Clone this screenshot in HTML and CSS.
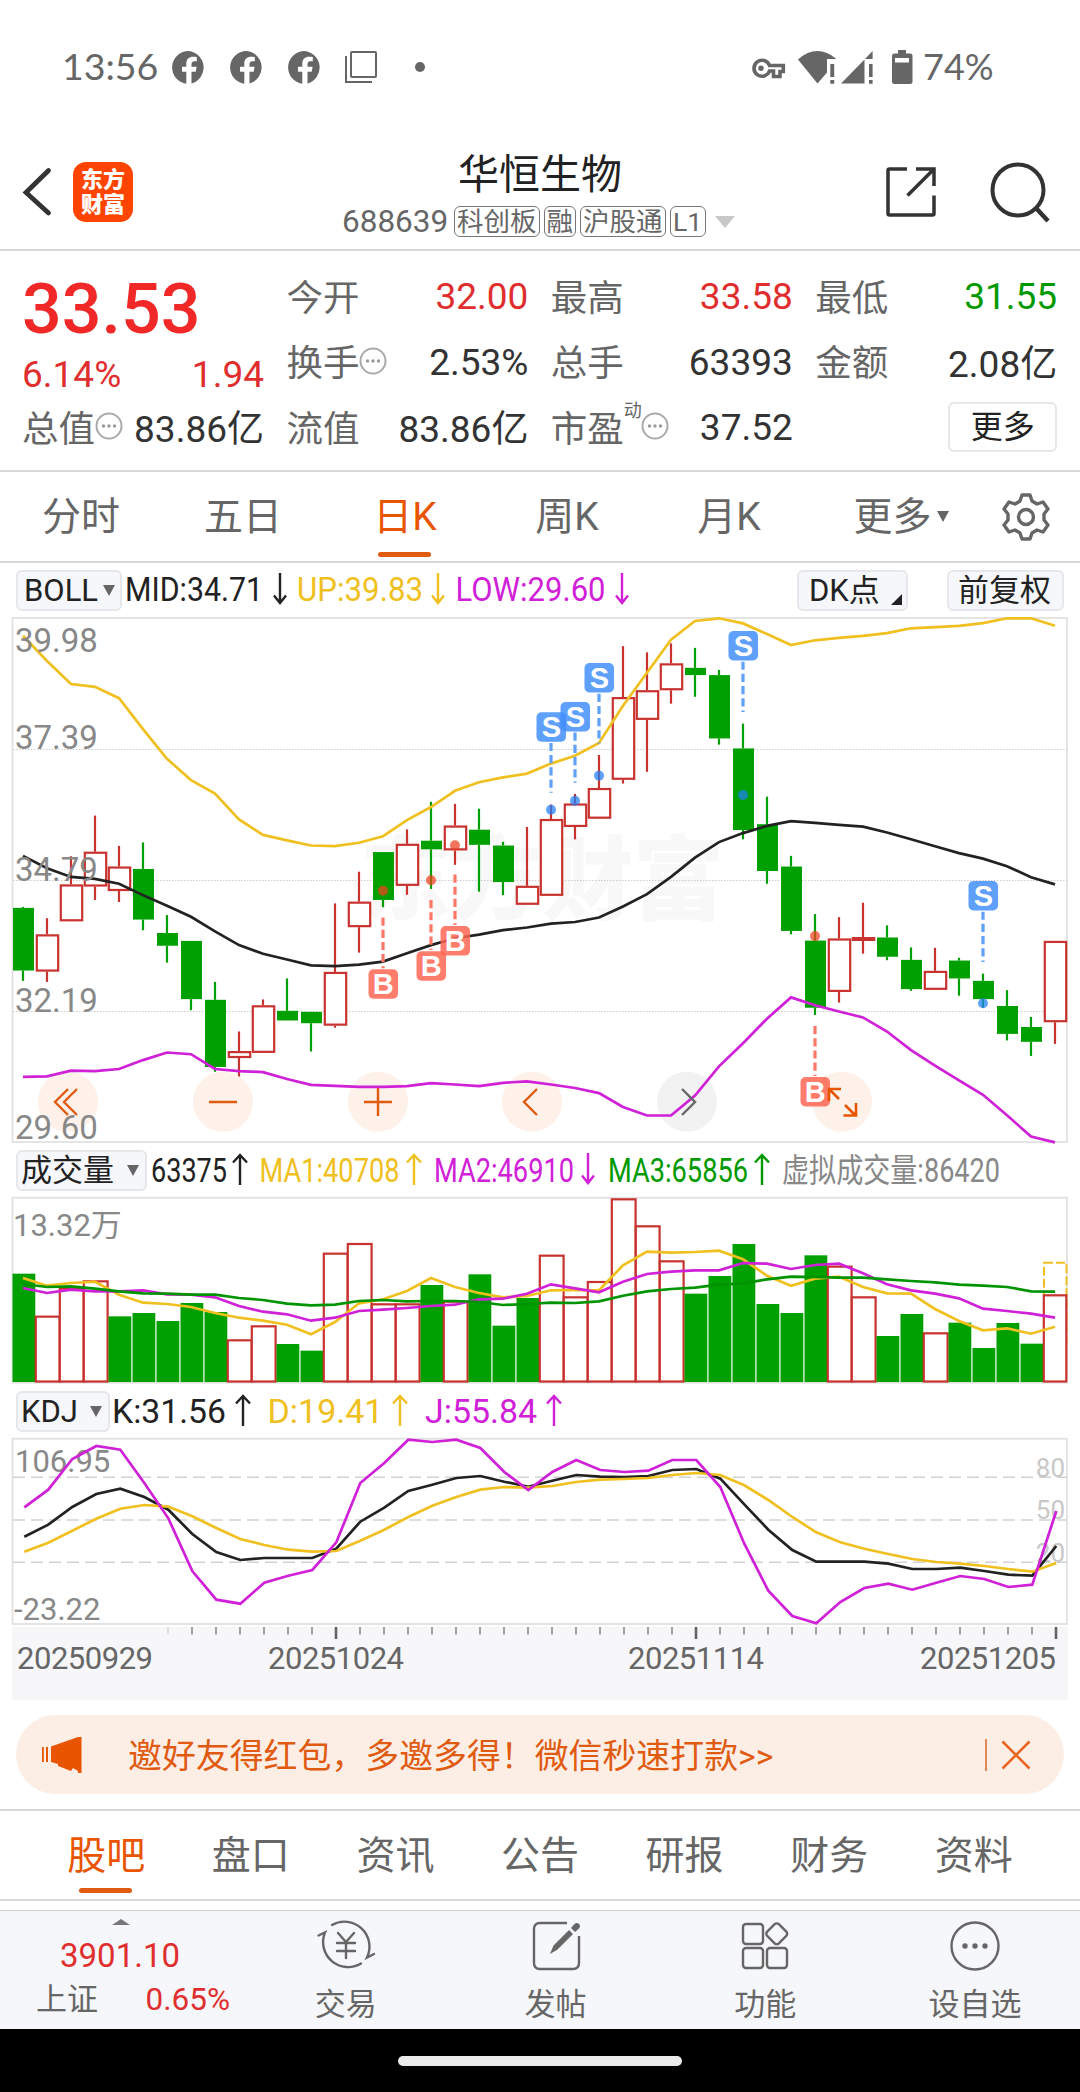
FILE: index.html
```html
<!DOCTYPE html>
<html lang="zh-CN">
<head>
<meta charset="utf-8">
<title>华恒生物 688639</title>
<link rel="stylesheet" href="styles.css">
</head>
<body>
<svg width="0" height="0" class="defs">
  <symbol id="fb" viewBox="0 0 33 33"><path fill="#666" fill-rule="evenodd" d="M16.500 0a16.500 16.500 0 0 1 4 32.400V20.800h4.200l.9-5h-5.100v-2.600c0-1.900 1-2.900 3-2.900h2.300V6.100c-1-.3-2.200-.4-3.500-.4-4.400 0-7 2.500-7 6.900v3.200H11v5h4.300v12A16.500 16.500 0 0 1 16.500 0z"/></symbol>
  <symbol id="info" viewBox="0 0 28 28"><circle cx="14" cy="14" r="12.500" fill="none" stroke="#aaa" stroke-width="2"/><circle cx="8.500" cy="14" r="1.700" fill="#999"/><circle cx="14" cy="14" r="1.700" fill="#999"/><circle cx="19.500" cy="14" r="1.700" fill="#999"/></symbol>
  <symbol id="up" viewBox="0 0 16 32"><path d="M8 32V2M1 9.500 8 2l7 7.500" fill="none" stroke="currentColor" stroke-width="2.400"/></symbol>
  <symbol id="down" viewBox="0 0 16 32"><path d="M8 0v30M2 22.500 8 30l6-7.500" fill="none" stroke="currentColor" stroke-width="2.400"/></symbol>
</svg>

<header class="status">
  <span class="clock">13:56</span>
  <svg class="fb" width="33" height="33"><use href="#fb"/></svg>
  <svg class="fb" width="33" height="33"><use href="#fb"/></svg>
  <svg class="fb" width="33" height="33"><use href="#fb"/></svg>
  <svg width="32" height="32" viewBox="0 0 32 32" fill="none" stroke="#666" stroke-width="2"><rect x="6" y="1" width="25" height="25" rx="1"/><path d="M1 5v26h26"/></svg>
  <i class="dot"></i>
  <svg class="status-right" width="165" height="36" viewBox="750 48 165 36">
    <path fill="none" stroke="#666" stroke-width="3.600" d="M768.500 64.500A8 8 0 1 0 768.500 70H772.500V75.500H779V70.500H782.300V64.500Z"/>
    <circle cx="760" cy="67.300" r="2.700" fill="#666"/>
    <path fill="#666" d="M797 58.500Q816 42 835.500 58H826V71.500L816.500 82.500Z M829.300 63h3.900v13h-3.900zM829.300 79h3.900v3.700h-3.900z M840 82.500 863.500 58.500V82.500Z M864 58 871.600 50V58Z M868 63h3.600v13h-3.600zM868 79h3.600v3.700h-3.600z"/>
    <path fill="#666" fill-rule="evenodd" d="M897 49h8v3.500h4a2.500 2.500 0 0 1 2.500 2.500v25.500a2.500 2.500 0 0 1-2.500 2.500h-15.500a2.500 2.500 0 0 1-2.500-2.500V55a2.500 2.500 0 0 1 2.500-2.500h3.500zM894 57h14v4.500h-14z"/>
  </svg>
  <span class="battery">74%</span>
</header>

<nav class="topbar">
  <svg class="back" width="30" height="50" viewBox="0 0 30 50"><path d="M26.500 3.500 4 25.500 26.500 46" fill="none" stroke="#333" stroke-width="4.800" stroke-linecap="round"/></svg>
  <div class="logo"><span>东方</span><span>财富</span></div>
  <div class="title">
    <h1>华恒生物</h1>
    <p><span class="code">688639</span><b>科创板</b><b>融</b><b>沪股通</b><b>L1</b><i></i></p>
  </div>
  <svg class="share" width="50" height="50" viewBox="0 0 50 50" fill="none" stroke="#333" stroke-width="3.500"><path d="M21 2H3.500Q2 2 2 3.500V46.500Q2 48 3.500 48H46.500Q48 48 48 46.500V28.500M30 2H48V19M48 2 21.500 28.500"/></svg>
  <svg class="search" width="60" height="60" viewBox="0 0 60 60" fill="none" stroke="#333"><circle cx="28" cy="28" r="25.500" stroke-width="4"/><path d="M46 46 58 59" stroke-width="4.500"/></svg>
</nav>

<section class="quote">
  <div class="price">
    <strong>33.53</strong>
    <p><span>6.14%</span><span>1.94</span></p>
  </div>
  <dl><dt>今开</dt><dd class="red">32.00</dd></dl>
  <dl><dt>最高</dt><dd class="red">33.58</dd></dl>
  <dl><dt>最低</dt><dd class="green">31.55</dd></dl>
  <dl><dt>换手<svg width="28" height="28"><use href="#info"/></svg></dt><dd>2.53%</dd></dl>
  <dl><dt>总手</dt><dd>63393</dd></dl>
  <dl><dt>金额</dt><dd class="cjk">2.08亿</dd></dl>
  <dl><dt>总值<svg width="28" height="28"><use href="#info"/></svg></dt><dd class="cjk">83.86亿</dd></dl>
  <dl><dt>流值</dt><dd class="cjk">83.86亿</dd></dl>
  <dl><dt>市盈<sup>动</sup><svg width="28" height="28"><use href="#info"/></svg></dt><dd>37.52</dd></dl>
  <div class="more"><button>更多</button></div>
</section>

<nav class="periods">
  <a>分时</a><a>五日</a><a class="on">日K</a><a>周K</a><a>月K</a><a class="drop">更多<i></i></a>
  <svg width="48" height="48" viewBox="0 0 48 48" fill="none" stroke="#666" stroke-width="3.400" stroke-linejoin="round"><path d="M20 2h8l2 6 5 3 6-2 5 7-4 5v6l4 5-5 7-6-2-5 3-2 6h-8l-2-6-5-3-6 2-5-7 4-5v-6l-4-5 5-7 6 2 5-3z"/><circle cx="24" cy="24" r="7.500"/></svg>
</nav>

<section class="legend first">
  <button class="pick boll">BOLL<i></i></button>
  <svg width="520" height="48" viewBox="122 562 520 48">
    <text x="125" y="600.500" textLength="138" fill="#222">MID:34.71</text><use href="#down" x="272" y="573" width="16" height="32" color="#222"/>
    <text x="297" y="600.500" textLength="126" fill="#f0c020">UP:39.83</text><use href="#down" x="430" y="573" width="16" height="32" color="#f0c020"/>
    <text x="455.500" y="600.500" textLength="150" fill="#d020d8">LOW:29.60</text><use href="#down" x="614" y="573" width="16" height="32" color="#d020d8"/>
  </svg>
  <button class="pick dk">DK点<i></i></button>
  <button class="pick fq">前复权</button>
</section>

<svg id="kline" class="chart" width="1080" height="540"></svg>

<section class="legend second">
  <button class="pick vol">成交量<i></i></button>
  <svg width="870" height="40" viewBox="147 1150 870 40">
    <text x="151" y="1182" textLength="76" fill="#222">63375</text><use href="#up" x="232" y="1153" width="16" height="32" color="#222"/>
    <text x="259.500" y="1182" textLength="140" fill="#f0c020">MA1:40708</text><use href="#up" x="406" y="1153" width="16" height="32" color="#f0c020"/>
    <text x="434" y="1182" textLength="140" fill="#d020d8">MA2:46910</text><use href="#down" x="580" y="1153" width="16" height="32" color="#d020d8"/>
    <text x="608" y="1182" textLength="140" fill="#009a00">MA3:65856</text><use href="#up" x="754" y="1153" width="16" height="32" color="#009a00"/>
    <text x="782" y="1182" textLength="218" fill="#888">虚拟成交量:86420</text>
  </svg>
</section>

<svg id="volume" class="chart" width="1080" height="200"></svg>

<section class="legend third">
  <button class="pick kdj">KDJ<i></i></button>
  <svg width="480" height="42" viewBox="110 1390 480 42">
    <text x="112" y="1423" textLength="114" fill="#222">K:31.56</text><use href="#up" x="235" y="1394" width="16" height="32" color="#222"/>
    <text x="267.500" y="1423" textLength="116" fill="#f0c020">D:19.41</text><use href="#up" x="392" y="1394" width="16" height="32" color="#f0c020"/>
    <text x="425" y="1423" textLength="112" fill="#d020d8">J:55.84</text><use href="#up" x="546" y="1394" width="16" height="32" color="#d020d8"/>
  </svg>
</section>

<svg id="kdj" class="chart" width="1080" height="268"></svg>

<aside class="banner">
  <svg width="42" height="38" viewBox="0 0 42 38" fill="#e85400"><path d="M0 11h1.800v15H0zM4 11h2v15H4zM9 10.500 36 1V35L31 32l-2 3-13-5v-2L9 26z"/><path d="M36 1h3.500v36H36z"/></svg>
  <span>邀好友得红包，多邀多得！微信秒速打款&gt;&gt;</span>
  <i></i>
  <svg width="30" height="30" viewBox="0 0 30 30"><path d="M1.500 1.500l27 27M28.500 1.500l-27 27" fill="none" stroke="#e8641c" stroke-width="2.500"/></svg>
</aside>

<nav class="tabs"><a class="on">股吧</a><a>盘口</a><a>资讯</a><a>公告</a><a>研报</a><a>财务</a><a>资料</a></nav>

<footer class="bottom">
  <div class="index"><i></i><strong>3901.10</strong><p><span>上证</span><em>0.65%</em></p></div>
  <a><svg width="60" height="52" viewBox="0 0 60 52" fill="none" stroke="#666" stroke-width="2.400" stroke-linecap="round"><path d="M16 6A25 25 0 0 1 51 38.500L58 35M45 44.500A25 25 0 0 1 9 13.500L2.500 16.500"/><path d="M22 14l8 9 8-9M30 23v16M21 24h18M21 32h18"/></svg>交易</a>
  <a><svg width="60" height="52" viewBox="0 0 60 52" fill="none" stroke="#666" stroke-width="2.400"><path d="M41 4H14Q8 4 8 10V44Q8 50 14 50H47Q53 50 53 44V17"/><path fill="#666" stroke="none" d="M24 35l3.500-8.500L43 11l4 4-15.500 15.500zM45 9l3.500-4q2.500-2 4.500 0t0 4.500L49 13z"/></svg>发帖</a>
  <a><svg width="60" height="52" viewBox="0 0 60 52" fill="none" stroke="#666" stroke-width="2.400"><rect x="8" y="5" width="20" height="20" rx="3"/><rect x="8" y="29" width="20" height="20" rx="3"/><rect x="32" y="29" width="20" height="20" rx="3"/><rect x="33.500" y="6.500" width="16.500" height="16.500" rx="3" transform="rotate(45 41.750 14.750)"/></svg>功能</a>
  <a><svg width="60" height="52" viewBox="0 0 60 52" fill="none" stroke="#666" stroke-width="2.400"><circle cx="30" cy="27" r="23.500"/><g fill="#666" stroke="none"><circle cx="20" cy="27" r="2.700"/><circle cx="30" cy="27" r="2.700"/><circle cx="40" cy="27" r="2.700"/></g></svg>设自选</a>
</footer>
<div class="gesture"><i></i></div>
<script src="charts.js"></script>
</body>
</html>
```
FILE: styles.css
```css
* { box-sizing: border-box; margin: 0; padding: 0; }
body { width: 1080px; height: 2092px; overflow: hidden; background: #fff; color: #222; font-family: Roboto, "Noto Sans CJK SC", sans-serif; }
svg { display: block; flex: none; }
i, em { font-style: normal; }
.defs { position: absolute; }
button { font: inherit; color: #222; background: #f6f7fa; border: 2px solid #e6e7ea; border-radius: 6px; }
.red { color: #e02e2e; }
.green { color: #009a00; }

/* status bar */
.status { display: flex; align-items: center; height: 134px; padding-left: 62px; color: #666; font-family: Lato, sans-serif; font-size: 37.500px; }
.clock { width: 109px; padding-bottom: 4px; }
.status .fb { margin-right: 25px; }
.status .dot { width: 10px; height: 10px; margin-left: 38px; border-radius: 50%; background: #666; }
.status-right { margin-left: 326px; }
.battery { margin-left: 7px; padding-bottom: 3px; font-size: 36px; }

/* top bar */
.topbar { display: flex; align-items: center; height: 117px; border-bottom: 2px solid #d8d8d8; }
.back { margin-left: 22px; }
.logo { display: flex; flex-direction: column; justify-content: center; width: 60px; height: 60px; margin-left: 21px; border-radius: 13px; background: #ff4400; color: #fff; text-align: center; font-size: 22px; font-weight: 900; line-height: 25px; }
.title { width: 540px; margin-left: 137px; }
.title h1 { margin-left: 188px; font-size: 41px; line-height: 52px; font-weight: 400; margin-top: 8px; }
.title p { display: flex; align-items: center; height: 42px; margin-left: 72px; color: #666; font-size: 31.500px; }
.code { width: 112px; }
.title b { height: 31px; margin-right: 4px; padding: 0 2px; border: 1.500px solid #777; border-radius: 6px; font-weight: 400; font-size: 26.500px; line-height: 29px; white-space: nowrap; }
.title i { margin-left: 5px; border: 10px solid transparent; border-top: 12px solid #c8c8c8; border-bottom: 0; }
.title b:nth-of-type(4) { width: 36px; text-align: center; }
.share { margin-left: 76px; }
.search { margin-left: 54px; }

/* quote grid */
.quote { display: grid; grid-template-columns: repeat(4, 242px); grid-template-rows: repeat(3, 65.500px); column-gap: 22.400px; height: 221px; padding: 12px 22px 0; border-bottom: 2px solid #d8d8d8; font-size: 36.500px; }
.price { grid-row: span 2; color: #f02828; }
.price strong { display: block; height: 88px; line-height: 93px; font-size: 70px; font-weight: 500; }
.price p { display: flex; justify-content: space-between; height: 44px; line-height: 47px; color: #e02e2e; font-size: 37px; }
.quote dl { display: flex; justify-content: space-between; align-items: center; white-space: nowrap; }
.quote dt { display: flex; align-items: center; padding-bottom: 1px; color: #666; }
.quote dt sup { width: 17px; overflow: visible; font-size: 18px; line-height: 20px; margin-top: -30px; }
.quote dd { padding-top: 2px; font-size: 37px; }
.quote dd.cjk { padding: 0 0 1px; }
.quote dd:not(.red):not(.green) { color: #333; }
.more { display: flex; justify-content: flex-end; align-items: center; }
.more button { width: 109px; height: 50px; background: #fff; font-size: 32px; line-height: 44px; }

/* period tabs */
.periods { display: flex; align-items: center; height: 91px; border-bottom: 2px solid #d8d8d8; color: #666; font-size: 39px; }
.periods a { position: relative; width: 162px; line-height: 92px; text-align: center; white-space: nowrap; }
.periods a.drop { display: flex; align-items: center; justify-content: center; gap: 5px; width: 182px; }
.periods svg { margin-left: 10px; }
.drop i { border: 6px solid transparent; border-top: 11px solid #666; border-bottom: 0; }
.on { color: #e85400; }
.periods .on::after, .tabs .on::after { content: ""; position: absolute; left: 50%; bottom: 6px; width: 53px; height: 5px; margin-left: -27px; border-radius: 3px; background: #e05a10; }

/* indicator legends */
.legend { display: flex; align-items: flex-start; padding-left: 16px; }
.legend text { font-size: 33px; }
.first { height: 47px; }
.first > svg { margin-top: -1px; }
.second { height: 40px; }
.third { height: 42px; }
.pick { display: flex; align-items: center; justify-content: space-between; height: 41px; padding: 0 6px; font-size: 31px; line-height: 37px; white-space: nowrap; }
.first .pick { margin-top: 7px; }
.second .pick { line-height: 35px; }
.third .pick { margin-top: 1px; }
.pick i { border: 6.500px solid transparent; border-top: 11px solid #666; border-bottom: 0; }
.boll { width: 106px; padding-right: 5px; }
.boll i { border-left-width: 6px; border-right-width: 6px; }
.vol { width: 131px; padding: 0 6px 0 3px; }
.kdj { width: 94px; padding-left: 3px; }
.dk { width: 111px; margin-left: 155px; padding: 0 4px 0 10px; }
.dk i { align-self: flex-end; margin-bottom: 4px; border: 0; border-left: 11px solid transparent; border-bottom: 11px solid #222; }
.fq { width: 117px; margin-left: 39px; padding: 0 9px; }

/* invitation banner */
.banner { display: flex; align-items: center; height: 79px; margin: 15px 16px; padding-left: 26px; border-radius: 40px; background: #fceee5; color: #e05a10; font-size: 33.900px; }
.banner span { margin-left: 44px; padding-bottom: 3px; width: 857px; white-space: nowrap; }
.banner i { width: 1.500px; height: 32px; background: #e08a58; }
.banner i + svg { margin-left: 14px; }

/* content tabs */
.tabs { display: flex; height: 92px; padding: 0 34px; border-top: 2px solid #d8d8d8; border-bottom: 2px solid #d8d8d8; color: #666; font-size: 39px; line-height: 91px; }
.tabs a { position: relative; width: 144.700px; text-align: center; }

/* bottom bar */
.bottom { display: flex; height: 119px; margin-top: 9px; border-top: 1.500px solid #d0d0d0; background: #f6f7fa; color: #666; font-size: 31px; }
.bottom a { display: flex; flex-direction: column; align-items: center; width: 209.700px; padding-top: 8px; line-height: 68px; }
.index { width: 241px; }
.index i { display: block; width: 0; margin: 8px 0 0 112px; border: 9px solid transparent; border-bottom: 6px solid #777; border-top: 0; }
.index strong { display: block; margin: 10px 0 0 60px; color: #e02e2e; font-size: 33px; font-weight: 400; line-height: 42px; }
.index p { display: flex; justify-content: space-between; padding: 0 11px 0 36px; line-height: 46px; }
.index em { color: #e02e2e; font-size: 31.500px; }
.gesture { display: flex; justify-content: center; align-items: flex-start; height: 64px; padding-top: 27px; background: #000; }
.gesture i { width: 284px; height: 10px; border-radius: 5px; background: #ebebeb; }

/* charts */
.chart { font-size: 33px; }
.axis { fill: #888; }
.badge { fill: #fff; font-family: "Liberation Sans", sans-serif; font-size: 29px; font-weight: 700; text-anchor: middle; }
.watermark { fill: #f8f8f8; font-size: 91px; font-weight: 900; }
```
FILE: charts.js
```js
const RED = '#c8322f', GREEN = '#00a000', YELLOW = '#f0c020', BLACK = '#222', PURPLE = '#d020d8';
const BLUE = '#5fa1fb', CORAL = '#ff7867';
const X = i => 23 + 24 * i;

document.querySelectorAll('.legend text').forEach(t => t.setAttribute('lengthAdjust', 'spacingAndGlyphs'));

const rect = (x, y, w, h, attrs) => `<rect x="${x}" y="${y}" width="${w}" height="${h}" ${attrs}/>`;
const line = (x1, y1, x2, y2, attrs) => `<path d="M${x1} ${y1}L${x2} ${y2}" ${attrs}/>`;
const text = (x, y, s, attrs = 'class="axis"') => `<text x="${x}" y="${y}" ${attrs}>${s}</text>`;
const curve = (values, fy, color, dx = 0) =>
  `<polyline fill="none" stroke="${color}" stroke-width="2.7" points="${values.map((v, i) => (X(i) + dx) + ',' + fy(v).toFixed(1)).join(' ')}"/>`;

/* candles: direction, body top, body bottom, high, low */
const candles = [
  [0,865,1047,862,1077],[1,942,1050,895,1080],[1,797,904,715,904],[1,702,803,597,842],[1,745,816,685,848],
  [0,752,899,675,930],[0,938,975,886,1024],[0,961,1130,961,1162],[0,1132,1327,1080,1341],[1,1281,1301,1224,1356],
  [1,1148,1286,1131,1286],[0,1164,1192,1070,1192],[0,1167,1200,1167,1282],[1,1051,1207,852,1213],[1,847,921,760,995],
  [0,703,842,703,863],[1,679,801,637,827],[0,670,695,557,810],[1,626,698,563,740],[0,638,682,577,818],
  [0,684,790,673,828],[1,801,856,630,856],[1,607,830,565,830],[1,562,630,534,666],[1,517,606,421,606],
  [1,253,493,105,504],[1,233,319,123,470],[1,155,233,97,272],[0,168,189,110,252],[0,189,373,174,391],
  [0,402,639,330,666],[0,622,758,542,795],[0,745,932,714,942],[0,960,1155,883,1176],[1,954,1109,892,1140],
  [1,950,961,850,998],[0,951,1007,916,1017],[0,1016,1101,980,1106],[1,1048,1103,981,1103],[0,1018,1070,1010,1120],
  [0,1077,1130,1056,1155],[0,1150,1231,1104,1250],[0,1211,1254,1182,1295],[1,961,1197,961,1260]];
const upper = [75,148,215,223,256,346,432,494,533,608,653,669,684,686,676,657,610,572,525,500,486,475,446,423,386,278,182,86,32,24,39,70,102,88,81,75,67,53,50,46,38,24,24,46];
const mid = [714,750,775,781,795,828,859,891,933,973,998,1015,1032,1034,1030,1021,997,973,953,943,930,922,911,906,893,861,825,775,719,674,648,627,613,618,624,629,646,666,686,706,722,744,776,797];
const lower = [1356,1354,1338,1339,1333,1307,1285,1290,1333,1339,1342,1362,1379,1382,1385,1385,1383,1374,1378,1383,1373,1369,1378,1388,1403,1443,1468,1468,1410,1325,1258,1187,1125,1148,1166,1183,1224,1278,1323,1366,1408,1467,1529,1546];
/* trade marks: letter, index, badge centre, dash start, dash end, dot */
const marks = [['B',15,1086,893,1040,815],['B',17,1034,842,987,785],['B',18,961,768,915,683],['B',33,1399,1208,1353,947],
  ['S',22,340,386,531,580],['S',23,310,356,502,554],['S',24,197,243,388,481],['S',30,104,150,296,537],['S',40,830,876,1022,1142]];

function drawKline() {
  const y = v => v / 2.904;
  let s = text(360, 302, '东方财富', 'class="watermark"');
  s += rect(12.5, 8, 1054.5, 524, 'fill="none" stroke="#e2e2e2" stroke-width="1.8"');
  [139.5, 270.5, 401.5].forEach(g => s += line(13, g, 1067, g, 'stroke="#ccc" stroke-dasharray="1.5 1.5"'));
  candles.forEach(([up, t, b, h, l], i) => {
    const x = X(i), c = up ? RED : GREEN, w = `stroke="${c}" stroke-width="2.2"`;
    s += line(x, y(h), x, y(t), w) + line(x, y(b), x, y(l), w);
    s += up ? rect(x - 10.2, y(t) + 1, 21.4, Math.max(y(b) - y(t) - 2, 1), `fill="#fff" ${w}`)
            : rect(x - 10, y(t), 21, y(b) - y(t), `fill="${c}"`);
  });
  const cy = 491.7;
  [68, 223, 378, 532, 687, 842].forEach((cx, n) => s += `<circle cx="${cx}" cy="${cy}" r="30" fill="${n === 4 ? '#f2f2f2' : '#fef1ea'}"/>`);
  const o = 'fill="none" stroke="#e05a10" stroke-width="2.4"';
  s += `<path ${o} d="M68 479 55 492 68 505M77 479 64 492 77 505M209 492H237M364 492H392M378 478V506M537 479 524 492 537 505"/>`;
  s += curve(upper, y, YELLOW) + curve(mid, y, BLACK) + curve(lower, y, PURPLE);
  s += '<path fill="none" stroke="#666" stroke-width="2.4" d="M682 479 695 492 682 505"/>';
  ['39.98', '37.39', '34.79', '32.19', '29.60'].forEach((v, i) => s += text(15, [42, 139, 271, 402, 528.5][i], v));
  marks.forEach(([k, i, c, d1, d2, dot]) => {
    const x = X(i), col = k === 'B' ? CORAL : BLUE;
    s += line(x, y(d1), x, y(d2), `stroke="${col}" stroke-width="3.2" stroke-dasharray="8.2 4"`);
    s += `<circle cx="${x}" cy="${y(dot)}" r="5" fill="${k === 'B' ? '#f04020' : '#2080f8'}" opacity=".72"/>`;
    s += rect(x - 14.5, y(c) - 14.8, 29.5, 29.5, `rx="5" fill="${k === 'B' ? '#ff6450' : '#3f8efb'}" opacity=".84"`);
    s += text(x + .3, y(c) + 10.4, k, 'class="badge"');
  });
  s += '<path fill="none" stroke="#e85400" stroke-width="2.6" d="M829 479V491M828 479H841M830 480 839 489M845 495 855 505M856 493V505.500H843.500"/>';
  kline.innerHTML = s;
}

const volumes = [[0,401],[1,527],[1,443],[1,421],[0,529],[0,519],[0,543],[0,489],[0,516],[1,598],[1,556],[0,612],[0,632],[1,338],[1,309],
  [1,490],[1,490],[0,435],[1,482],[0,403],[0,557],[0,474],[1,344],[1,469],[1,423],[1,175],[1,256],[1,361],[0,461],[0,408],
  [0,312],[0,492],[0,519],[0,346],[1,377],[1,469],[0,588],[0,522],[1,577],[0,548],[0,624],[0,549],[0,611],[1,463]];
const ma1 = [414,437,429,425,464,488,492,501,519,533,542,554,583,546,490,478,453,414,441,459,472,468,451,450,451,376,335,338,336,332,358,407,437,416,410,441,460,461,507,543,571,565,581,560];
const ma2 = [444,459,449,454,454,451,463,464,472,498,515,523,542,533,513,509,504,498,494,478,476,461,433,445,457,425,402,395,391,391,369,371,387,375,371,400,433,451,461,475,506,513,521,533];
const ma3 = [432,441,439,446,454,460,461,464,464,474,480,491,496,494,483,480,484,483,483,486,495,492,488,489,484,467,454,447,443,434,430,418,410,411,413,413,418,423,427,434,437,441,454,455];

function drawVolume() {
  const y = v => v / 3 - 50;
  let s = rect(12.5, 7.7, 1054.5, 185, 'fill="none" stroke="#e2e2e2" stroke-width="1.8"');
  s += rect(1044, y(368), 22.5, 80, `fill="none" stroke="${YELLOW}" stroke-width="2" stroke-dasharray="9 3"`);
  volumes.forEach(([up, t], i) => {
    const x = X(i);
    s += up ? rect(x - 11.2, y(t) + 1, i === 43 ? 22.5 : 23.8, 191.5 - y(t) - 1, `fill="#fff" stroke="${RED}" stroke-width="2.2"`)
            : rect(x - 10.5, y(t), 22.8, 192 - y(t), `fill="${GREEN}"`);
  });
  s += curve(ma1, y, YELLOW) + curve(ma2, y, PURPLE) + curve(ma3, y, '#009400');
  s += text(13, 46, '13.32万', 'class="axis" font-size="31"');
  volume.innerHTML = s;
}

const K = [440,404,351,312,296,321,359,432,486,510,504,504,504,476,395,353,303,284,264,258,275,290,272,255,260,261,258,240,237,266,343,419,480,515,515,515,521,537,537,533,543,554,557,468];
const D = [485,458,422,386,356,345,350,379,414,447,465,479,485,483,452,419,381,347,321,299,291,293,288,276,269,267,264,255,249,255,286,330,381,427,457,476,492,507,516,521,528,537,545,519];
const J = [352,299,207,168,179,279,385,543,629,641,578,557,540,457,279,219,149,156,149,174,246,300,246,210,240,246,242,210,210,291,461,602,678,700,636,594,581,599,578,558,567,591,584,363];

function drawKdj() {
  const y = v => v / 3 - 42;
  let s = rect(12.5, 6.7, 1054.5, 185.3, 'fill="none" stroke="#e2e2e2" stroke-width="1.8"');
  s += rect(12, 195, 1056, 73, 'fill="#f7f7fa"');
  [[262, '80', 260], [390, '50', 388], [517, '20', 516]].forEach(([g, label, b]) => {
    s += line(13, y(g), 1067, y(g), 'stroke="#d2d2d2" stroke-width="1.5" stroke-dasharray="12 6"');
    s += text(1065, y(b), label, 'fill="#c8c8c8" font-size="26" text-anchor="end"');
  });
  s += text(15, 39.500, '106.95', 'class="axis" font-size="31"') + text(14, 187.5, '-23.22', 'class="axis" font-size="31"');
  s += curve(K, y, BLACK, 1.3) + curve(D, y, YELLOW, 1.3) + curve(J, y, PURPLE, 1.3);
  for (let i = 6; i < 44; i++) {
    const major = i % 15 === 13;
    s += line(X(i) + 1, 195, X(i) + 1, major ? 207 : 202.5, `stroke="${major ? '#666' : i === 6 ? '#ddd' : '#999'}" stroke-width="${major ? 2.6 : 1.8}"`);
  }
  [['20250929', 17], ['20251024', 268], ['20251114', 628], ['20251205', 920]].forEach(([d, x]) =>
    s += text(x, 237, d, 'fill="#666" font-size="31" textLength="136"'));
  kdj.innerHTML = s;
}

drawKline();
drawVolume();
drawKdj();
```
